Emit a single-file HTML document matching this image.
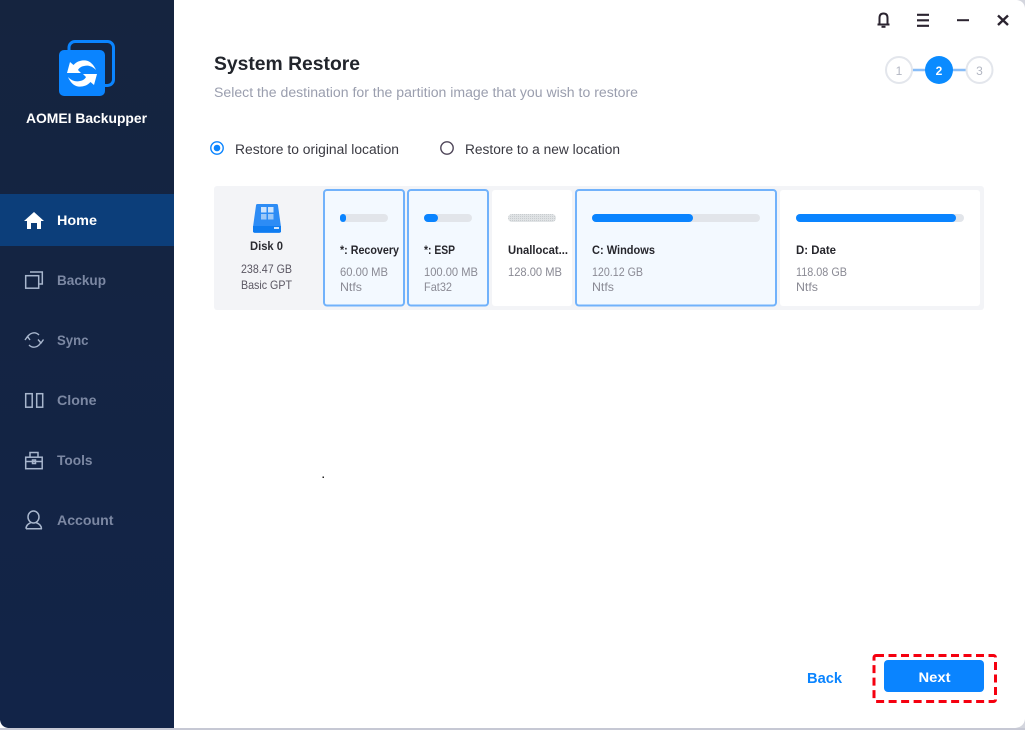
<!DOCTYPE html>
<html><head><meta charset="utf-8"><title>AOMEI Backupper</title>
<style>
html,body{margin:0;padding:0;width:1025px;height:730px;overflow:hidden;background:#fff}
svg{display:block}
text{font-family:"Liberation Sans",sans-serif}
</style></head><body>
<svg width="1025" height="730" viewBox="0 0 1025 730" xmlns="http://www.w3.org/2000/svg">
<defs>
<linearGradient id="side" x1="0" y1="0" x2="0" y2="1"><stop offset="0" stop-color="#15243f"/><stop offset="1" stop-color="#122448"/></linearGradient>
<pattern id="dots" width="2" height="2" patternUnits="userSpaceOnUse"><rect width="2" height="2" fill="#e0e3e5"/><rect width="1" height="1" fill="#c8cccf"/></pattern>
</defs>
<rect width="1025" height="730" fill="#fff"/>
<rect x="0" y="728" width="1025" height="2" fill="#c6c8d4"/>
<path d="M1017 0Q1024 1 1025 8V0Z" fill="#d4d6de"/>
<path d="M1025 719Q1024 727 1015 728H1025Z" fill="#d4d6de"/>
<path d="M0 0H174V728H8Q1 727 0 720Z" fill="url(#side)"/>

<!-- logo -->
<rect x="69" y="41.500" width="44.500" height="44" rx="6" fill="none" stroke="#0a84ff" stroke-width="3"/>
<rect x="59" y="50" width="46" height="46" rx="5" fill="#0a84ff"/>
<path id="arrow" d="M67 73L70 62L73.500 65C77 61 82 60 86 60.500C90 61 94 65 96 70C92 66 88 65 84 66C81 66.500 79 68 78 70L81 73Z" fill="#fff"/>
<path d="M67 73L70 62L73.500 65C77 61 82 60 86 60.500C90 61 94 65 96 70C92 66 88 65 84 66C81 66.500 79 68 78 70L81 73Z" fill="#fff" transform="rotate(180 82 73.500)"/>
<text x="26" y="123" font-size="14" font-weight="700" fill="#fff" textLength="121" lengthAdjust="spacingAndGlyphs">AOMEI Backupper</text>

<!-- nav -->
<rect x="0" y="194" width="174" height="52" fill="#0c3e7a"/>
<path d="M24 221L34 212L44 221L41 221V229H37V223H31V229H27V221Z" fill="#fff"/>
<text x="57" y="225" font-size="14" font-weight="700" fill="#fff" textLength="40" lengthAdjust="spacingAndGlyphs">Home</text>

<g fill="none" stroke="#a8b6cd" stroke-width="1.500">
<rect x="25.700" y="275.700" width="13" height="12.500"/>
<path d="M30 272H42.300V284H39.500"/>
<path d="M27 338C29 333 35 331 39 335M41 342C39 347 33 349 29 345" stroke-width="1.400"/>
<path d="M25 340L27.500 336.500L30 340M38 339.500L41 343L43.500 339.500" stroke-width="1.400"/>
<rect x="25.700" y="393.700" width="6.500" height="13.500"/>
<rect x="36.700" y="393.700" width="6" height="13.500"/>
<rect x="25.700" y="457.200" width="16.500" height="11.500"/>
<path d="M30 457V452.500H38V457M25.700 461.500H42.300"/>
<rect x="32.500" y="460" width="3" height="3.500"/>
<ellipse cx="33.500" cy="517" rx="5.500" ry="6"/>
<path d="M26 528.700C26 525 29 523.500 31 522.500M41.500 528.700C41.500 525 38.500 523.500 36 522.500M26 528.700H42"/>
</g>
<g font-size="14" font-weight="700" fill="#7c88a3">
<text x="57" y="285" textLength="49" lengthAdjust="spacingAndGlyphs">Backup</text>
<text x="57" y="345" textLength="31.500" lengthAdjust="spacingAndGlyphs">Sync</text>
<text x="57" y="405" textLength="39.500" lengthAdjust="spacingAndGlyphs">Clone</text>
<text x="57" y="465" textLength="35.500" lengthAdjust="spacingAndGlyphs">Tools</text>
<text x="57" y="525" textLength="56.500" lengthAdjust="spacingAndGlyphs">Account</text>
</g>

<!-- window controls -->
<g fill="none" stroke="#2b2430" stroke-width="2">
<path d="M877.500 24.500H889.500M879.500 24V18C879.500 15 881 13.500 883.500 13.500C886 13.500 887.500 15 887.500 18V24"/>
<path d="M881.500 26.800H885.500"/>
<path d="M917 14.800H929M917 20.300H929M917 25.800H929" stroke-width="2.200"/>
<path d="M957 20.200H969" stroke-width="2"/>
<path d="M998 15.500L1008 25M1008 15.500L998 25" stroke-width="2.400"/>
</g>

<!-- header -->
<text x="214" y="70" font-size="19" font-weight="700" fill="#22252c" textLength="146" lengthAdjust="spacingAndGlyphs">System Restore</text>
<text x="214" y="97" font-size="13.500" fill="#9a9eae" textLength="424" lengthAdjust="spacingAndGlyphs">Select the destination for the partition image that you wish to restore</text>

<!-- stepper -->
<path d="M912 70H927M952 70H967" stroke="#88bdf8" stroke-width="2.500"/>
<circle cx="899" cy="70" r="13" fill="#fff" stroke="#e3e6ec" stroke-width="2"/>
<circle cx="979.500" cy="70" r="13" fill="#fff" stroke="#e3e6ec" stroke-width="2"/>
<circle cx="939" cy="70" r="14" fill="#0a8bff"/>
<text x="899" y="75" font-size="12" fill="#b2b6c2" text-anchor="middle">1</text>
<text x="939" y="75" font-size="12" font-weight="700" fill="#fff" text-anchor="middle">2</text>
<text x="979.500" y="75" font-size="12" fill="#b2b6c2" text-anchor="middle">3</text>

<!-- radios -->
<circle cx="217" cy="148" r="6.200" fill="#fff" stroke="#0a84ff" stroke-width="1.400"/>
<circle cx="217" cy="148" r="3.300" fill="#0a84ff"/>
<circle cx="447" cy="148" r="6.200" fill="#fff" stroke="#4e4558" stroke-width="1.400"/>
<text x="235" y="154" font-size="13.500" fill="#3a3a42" textLength="164" lengthAdjust="spacingAndGlyphs">Restore to original location</text>
<text x="465" y="154" font-size="13.500" fill="#3a3a42" textLength="155" lengthAdjust="spacingAndGlyphs">Restore to a new location</text>

<!-- disk panel -->
<rect x="214" y="186" width="770" height="124" rx="3" fill="#f3f4f7"/>
<path d="M256 205.500Q256 204 257.500 204H276.500Q278 204 278 205.500L281 227V231Q281 233 279 233H255Q253 233 253 231V227Z" fill="#2d8cf5"/>
<rect x="253" y="226" width="28" height="6" fill="#0f7cf0"/>
<g fill="#cfe4fc"><rect x="261" y="207" width="5.500" height="5.500"/><rect x="268" y="207" width="5.500" height="5.500"/><rect x="261" y="214" width="5.500" height="5.500" fill="#9cc8f8"/><rect x="268" y="214" width="5.500" height="5.500" fill="#9cc8f8"/></g>
<rect x="274" y="227" width="5" height="2" fill="#cfe4fc"/>
<text x="250" y="250" font-size="12" font-weight="700" fill="#2a2a30" textLength="33" lengthAdjust="spacingAndGlyphs">Disk 0</text>
<text x="241" y="273" font-size="12" fill="#5a5662" textLength="51" lengthAdjust="spacingAndGlyphs">238.47 GB</text>
<text x="241" y="289" font-size="12" fill="#5a5662" textLength="51" lengthAdjust="spacingAndGlyphs">Basic GPT</text>

<!-- cards -->
<g fill="#f3f9ff" stroke="#71b2fb" stroke-width="2">
<rect x="324" y="190" width="80" height="115.500" rx="3"/>
<rect x="408" y="190" width="80" height="115.500" rx="3"/>
<rect x="576" y="190" width="200" height="115.500" rx="3"/>
</g>
<rect x="492" y="190" width="80" height="116" rx="3" fill="#fff"/>
<rect x="780" y="190" width="200" height="116" rx="3" fill="#fff"/>

<!-- bars -->
<g fill="#e2e5ea">
<rect x="340" y="214" width="48" height="8" rx="4"/>
<rect x="424" y="214" width="48" height="8" rx="4"/>
<rect x="508" y="214" width="48" height="8" rx="4" fill="url(#dots)"/>
<rect x="592" y="214" width="168" height="8" rx="4"/>
<rect x="796" y="214" width="168" height="8" rx="4"/>
</g>
<g fill="#0a84ff">
<rect x="340" y="214" width="6" height="8" rx="3"/>
<rect x="424" y="214" width="14" height="8" rx="4"/>
<rect x="592" y="214" width="101" height="8" rx="4"/>
<rect x="796" y="214" width="160" height="8" rx="4"/>
</g>

<g font-size="12" font-weight="700" fill="#26262c">
<text x="340" y="254" textLength="59" lengthAdjust="spacingAndGlyphs">*: Recovery</text>
<text x="424" y="254" textLength="31" lengthAdjust="spacingAndGlyphs">*: ESP</text>
<text x="508" y="254" textLength="60" lengthAdjust="spacingAndGlyphs">Unallocat...</text>
<text x="592" y="254" textLength="63" lengthAdjust="spacingAndGlyphs">C: Windows</text>
<text x="796" y="254" textLength="40" lengthAdjust="spacingAndGlyphs">D: Date</text>
</g>
<g font-size="12" fill="#8a8a94">
<text x="340" y="276" textLength="48" lengthAdjust="spacingAndGlyphs">60.00 MB</text><text x="340" y="291" textLength="22" lengthAdjust="spacingAndGlyphs">Ntfs</text>
<text x="424" y="276" textLength="54" lengthAdjust="spacingAndGlyphs">100.00 MB</text><text x="424" y="291" textLength="28" lengthAdjust="spacingAndGlyphs">Fat32</text>
<text x="508" y="276" textLength="54" lengthAdjust="spacingAndGlyphs">128.00 MB</text>
<text x="592" y="276" textLength="51" lengthAdjust="spacingAndGlyphs">120.12 GB</text><text x="592" y="291" textLength="22" lengthAdjust="spacingAndGlyphs">Ntfs</text>
<text x="796" y="276" textLength="51" lengthAdjust="spacingAndGlyphs">118.08 GB</text><text x="796" y="291" textLength="22" lengthAdjust="spacingAndGlyphs">Ntfs</text>
</g>

<rect x="322.500" y="476.500" width="1.500" height="1.500" fill="#222"/>

<!-- footer -->
<text x="807" y="683" font-size="15" font-weight="700" fill="#0a84ff" textLength="35" lengthAdjust="spacingAndGlyphs">Back</text>
<rect x="884" y="660" width="100" height="32" rx="4" fill="#0a84ff"/>
<text x="918.500" y="682" font-size="14" font-weight="700" fill="#fff" textLength="32" lengthAdjust="spacingAndGlyphs">Next</text>
<rect x="874" y="655.500" width="121.500" height="46" rx="2" fill="none" stroke="#f5000f" stroke-width="3" stroke-dasharray="8 4.500"/>
</svg>
</body></html>
